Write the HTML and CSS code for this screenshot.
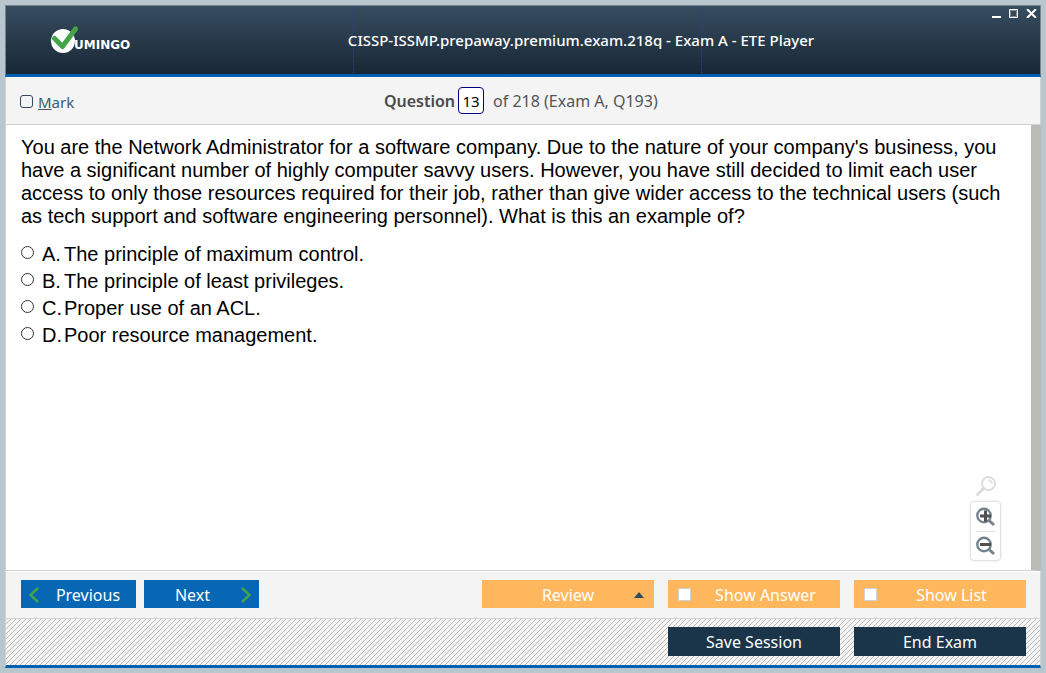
FILE: index.html
```html
<!DOCTYPE html>
<html lang="en">
<head>
<meta charset="utf-8">
<meta name="viewport" content="width=device-width, initial-scale=1">
<title>CISSP-ISSMP.prepaway.premium.exam.218q - Exam A - ETE Player</title>
<link rel="stylesheet" href="styles.css">
</head>
<body>
<div class="window">
  <header class="titlebar">
    <div class="brand">
      <svg class="brand-mark" viewBox="0 0 28 28" aria-hidden="true">
        <circle cx="12" cy="15" r="12" fill="#fff"/>
        <path d="M3.500 12.500L11.500 20.500L24.500 3" fill="none" stroke="#43a547" stroke-width="5" stroke-linecap="round" stroke-linejoin="round"/>
      </svg>
      <span class="brand-name">UMINGO</span>
    </div>
    <h1 class="title">CISSP-ISSMP.prepaway.premium.exam.218q - Exam A - ETE Player</h1>
    <div class="window-controls">
      <button type="button" class="window-button" aria-label="Minimize"><svg viewBox="0 0 11 9"><path d="M2 7h9v2h-9z" fill="#fff"/></svg></button>
      <button type="button" class="window-button" aria-label="Maximize"><svg viewBox="0 0 11 9"><path d="M1.500 .5h8v8h-8z" fill="none" stroke="#fff"/><path d="M2.500 1.500h6v6h-6z" fill="none" stroke="#85858a"/></svg></button>
      <button type="button" class="window-button" aria-label="Close"><svg viewBox="0 0 11 9"><path d="M1 0L10 9M10 0L1 9" stroke="#fff" stroke-width="2"/></svg></button>
    </div>
  </header>

  <div class="question-bar">
    <label class="mark"><input type="checkbox" class="mark-box"><span><u>M</u>ark</span></label>
    <div class="counter">
      <label class="counter-label" for="question-number">Question</label>
      <input class="counter-input" id="question-number" type="text" value="13">
      <span class="counter-total">of 218 (Exam A, Q193)</span>
    </div>
  </div>

  <main class="content">
    <p class="question">You are the Network Administrator for a software company. Due to the nature of your company's business, you<br>have a significant number of highly computer savvy users. However, you have still decided to limit each user<br>access to only those resources required for their job, rather than give wider access to the technical users (such<br>as tech support and software engineering personnel). What is this an example of?</p>
    <div class="answers">
      <label class="answer"><input type="radio" name="answer"><span class="letter">A.</span><span>The principle of maximum control.</span></label>
      <label class="answer"><input type="radio" name="answer"><span class="letter">B.</span><span>The principle of least privileges.</span></label>
      <label class="answer"><input type="radio" name="answer"><span class="letter">C.</span><span>Proper use of an ACL.</span></label>
      <label class="answer"><input type="radio" name="answer"><span class="letter">D.</span><span>Poor resource management.</span></label>
    </div>
    <div class="zoom-tools">
      <button type="button" class="zoom-reset" aria-label="Reset zoom"><svg viewBox="0 0 20 20"><circle cx="12.500" cy="7.500" r="6.500" fill="none" stroke="#ddd" stroke-width="2"/><path d="M12.500 4a4 4 0 0 1 3.500 3.500" fill="none" stroke="#ddd" stroke-width="1.500"/><path d="M7.500 12.500L1.500 18.500" stroke="#ddd" stroke-width="3" stroke-linecap="round"/></svg></button>
      <div class="zoom-group">
        <button type="button" class="zoom-button" aria-label="Zoom in"><svg viewBox="0 0 20 20"><circle cx="8" cy="8.500" r="6.700" fill="#fff" stroke="#73838e" stroke-width="2.400"/><path d="M12.500 13l5.500 5" stroke="#73838e" stroke-width="3"/><path d="M4 9h11M9.500 3.500v11" stroke="#505050" stroke-width="3"/></svg></button>
        <button type="button" class="zoom-button" aria-label="Zoom out"><svg viewBox="0 0 20 20"><circle cx="8" cy="8.500" r="6.700" fill="#fff" stroke="#73838e" stroke-width="2.400"/><path d="M12.500 13l5.500 5" stroke="#73838e" stroke-width="3"/><path d="M4 8.500h11" stroke="#505050" stroke-width="3"/></svg></button>
      </div>
    </div>
  </main>

  <nav class="actions">
    <button type="button" class="button step previous"><svg class="chevron" viewBox="0 0 10 16"><path d="M9 1L1.500 8L9 15" fill="none" stroke="#43a547" stroke-width="2.400"/></svg><span>Previous</span></button>
    <button type="button" class="button step next"><span>Next</span><svg class="chevron" viewBox="0 0 10 16"><path d="M1 1L8.500 8L1 15" fill="none" stroke="#43a547" stroke-width="2.400"/></svg></button>
    <button type="button" class="button option review"><span>Review</span><svg class="caret" viewBox="0 0 10 6"><path d="M0 6L5 0L10 6z" fill="#2f4a60"/></svg></button>
    <label class="button option toggle"><input type="checkbox" class="option-box"><span>Show Answer</span></label>
    <label class="button option toggle"><input type="checkbox" class="option-box"><span>Show List</span></label>
  </nav>

  <footer class="session">
    <button type="button" class="button dark">Save Session</button>
    <button type="button" class="button dark">End Exam</button>
  </footer>
</div>
</body>
</html>
```
FILE: styles.css
```css
* { box-sizing: border-box; }

body {
  margin: 0;
  min-height: 100vh;
  padding: 5px;
  display: flex;
  background: #b9c6cd;
  color: #000;
  font-family: "Noto Sans", sans-serif;
  font-size: 16px;
}

button, input { margin: 0; font: inherit; }
button { padding: 0; border: 0; background: none; color: inherit; cursor: pointer; }
svg { display: block; }

.window {
  flex: 1;
  min-width: 0;
  display: flex;
  flex-direction: column;
  background: #f4f4f4;
}

.titlebar {
  display: grid;
  grid-template-columns: 1fr auto 1fr;
  align-items: center;
  height: 72px;
  border: 1px solid #74858d;
  border-bottom: 3px solid #0060b2;
  background:
    linear-gradient(#2f3f90 50%, transparent 50%) 33.6% 0 / 1px 2px repeat-y,
    linear-gradient(#2f3f90 50%, transparent 50%) 67.3% 0 / 1px 2px repeat-y,
    linear-gradient(#364d60, #192735);
}

.brand { display: flex; padding-left: 45px; }
.brand-mark { width: 28px; height: 28px; margin-right: -5px; }
.brand-name {
  align-self: flex-end;
  color: #fff;
  font: bold 12px/18px "DejaVu Sans", sans-serif;
}

.title {
  margin: 0;
  padding-left: 116px;
  color: #fff;
  font-size: 15px;
  font-weight: 500;
  line-height: 20px;
}

.window-controls {
  align-self: start;
  justify-self: end;
  display: flex;
  gap: 7px;
  padding: 3px 3px 0 0;
}
.window-button svg { width: 11px; height: 9px; }

.question-bar {
  display: grid;
  grid-template-columns: 1fr auto 1fr;
  align-items: center;
  height: 48px;
  padding: 0 18px 0 14px;
  border: 1px solid #d2d2d2;
  border-top: 0;
}
.mark { display: flex; align-items: center; gap: 5px; padding-top: 2px; color: #41586b; font-size: 15px; }
.mark-box {
  appearance: none;
  width: 13px;
  height: 13px;
  border: 1px solid #34495e;
  border-radius: 3px;
}
.counter { display: flex; align-items: center; color: #555; }
.counter-label { font-weight: 600; color: #4a4a4a; }
.counter-input {
  width: 26px;
  height: 27px;
  margin: 0 9px 0 3px;
  padding: 0;
  border: 1px solid #00007b;
  border-radius: 4px;
  background: #fff;
  color: #000;
  font-size: 15px;
  text-align: center;
}
.counter-total { width: 165px; overflow: hidden; white-space: nowrap; }

.content {
  position: relative;
  flex: 1;
  padding: 11px 20px 11px 15px;
  border-left: 1px solid #d2d2d2;
  border-right: 10px solid #bbbab6;
  border-bottom: 1px solid #d2d2d2;
  background: #fff;
  font-family: "Liberation Sans", Arial, sans-serif;
  font-size: 20px;
  line-height: 23px;
}
.question { margin: 0 0 15px; }
.answers { display: grid; gap: 4px; }
.answer { display: flex; align-items: center; }
.answer input {
  appearance: none;
  width: 13px;
  height: 13px;
  margin: 0 8px 4px 0;
  border: 1px solid #333;
  border-radius: 50%;
}
.letter { width: 22px; }

.zoom-tools {
  position: absolute;
  right: 30px;
  bottom: 9px;
  display: grid;
  justify-items: center;
  gap: 5px;
}
.zoom-reset svg { width: 20px; height: 20px; }
.zoom-group {
  width: 31px;
  padding: 0 5px;
  border: 1px solid #e2e2e2;
  border-radius: 4px;
  box-shadow: 0 0 2px #ddd;
}
.zoom-button { display: grid; place-items: center; width: 100%; height: 29px; }
.zoom-button + .zoom-button { border-top: 1px solid #ddd; }
.zoom-button svg { width: 20px; height: 20px; }

.actions {
  display: flex;
  gap: 8px;
  padding: 8px 14px 10px 15px;
  border: 1px solid #d2d2d2;
  border-top-color: #fff;
}
.button {
  display: flex;
  align-items: center;
  justify-content: center;
  height: 28px;
  color: #fff;
  line-height: 22px;
}
.button span { flex: 1; text-align: center; }
.actions .button { padding-top: 1px; }
.step { width: 115px; background: #0767b5; }
.previous { padding-left: 8px; }
.next { padding-right: 8px; }
.chevron { width: 10px; height: 16px; }
.previous .chevron { margin-right: 1px; }
.option { width: 172px; margin-left: 6px; padding: 0 10px; background: #ffb75d; }
.review { margin-left: auto; padding-left: 20px; }
.toggle { padding-right: 0; }
.caret { width: 10px; height: 6px; }
.option-box {
  appearance: none;
  width: 13px;
  height: 13px;
  border: 1px solid #d2d2d2;
  background: #fff;
}

.session {
  display: flex;
  justify-content: flex-end;
  gap: 14px;
  height: 49px;
  padding: 8px 14px;
  border: 1px solid #d2d2d2;
  border-top: 0;
  border-bottom: 3px solid #0060b2;
  background: #f4f4f4 url("data:image/svg+xml,%3Csvg xmlns='http://www.w3.org/2000/svg' width='5' height='5' fill='%23bbb'%3E%3Cpath d='M4 0h1v1h-1zM3 1h1v1h-1zM2 2h1v1h-1zM1 3h1v1h-1zM0 4h1v1h-1z'/%3E%3C/svg%3E");
}
.dark { width: 172px; height: 29px; background: #1a344a; }
```
